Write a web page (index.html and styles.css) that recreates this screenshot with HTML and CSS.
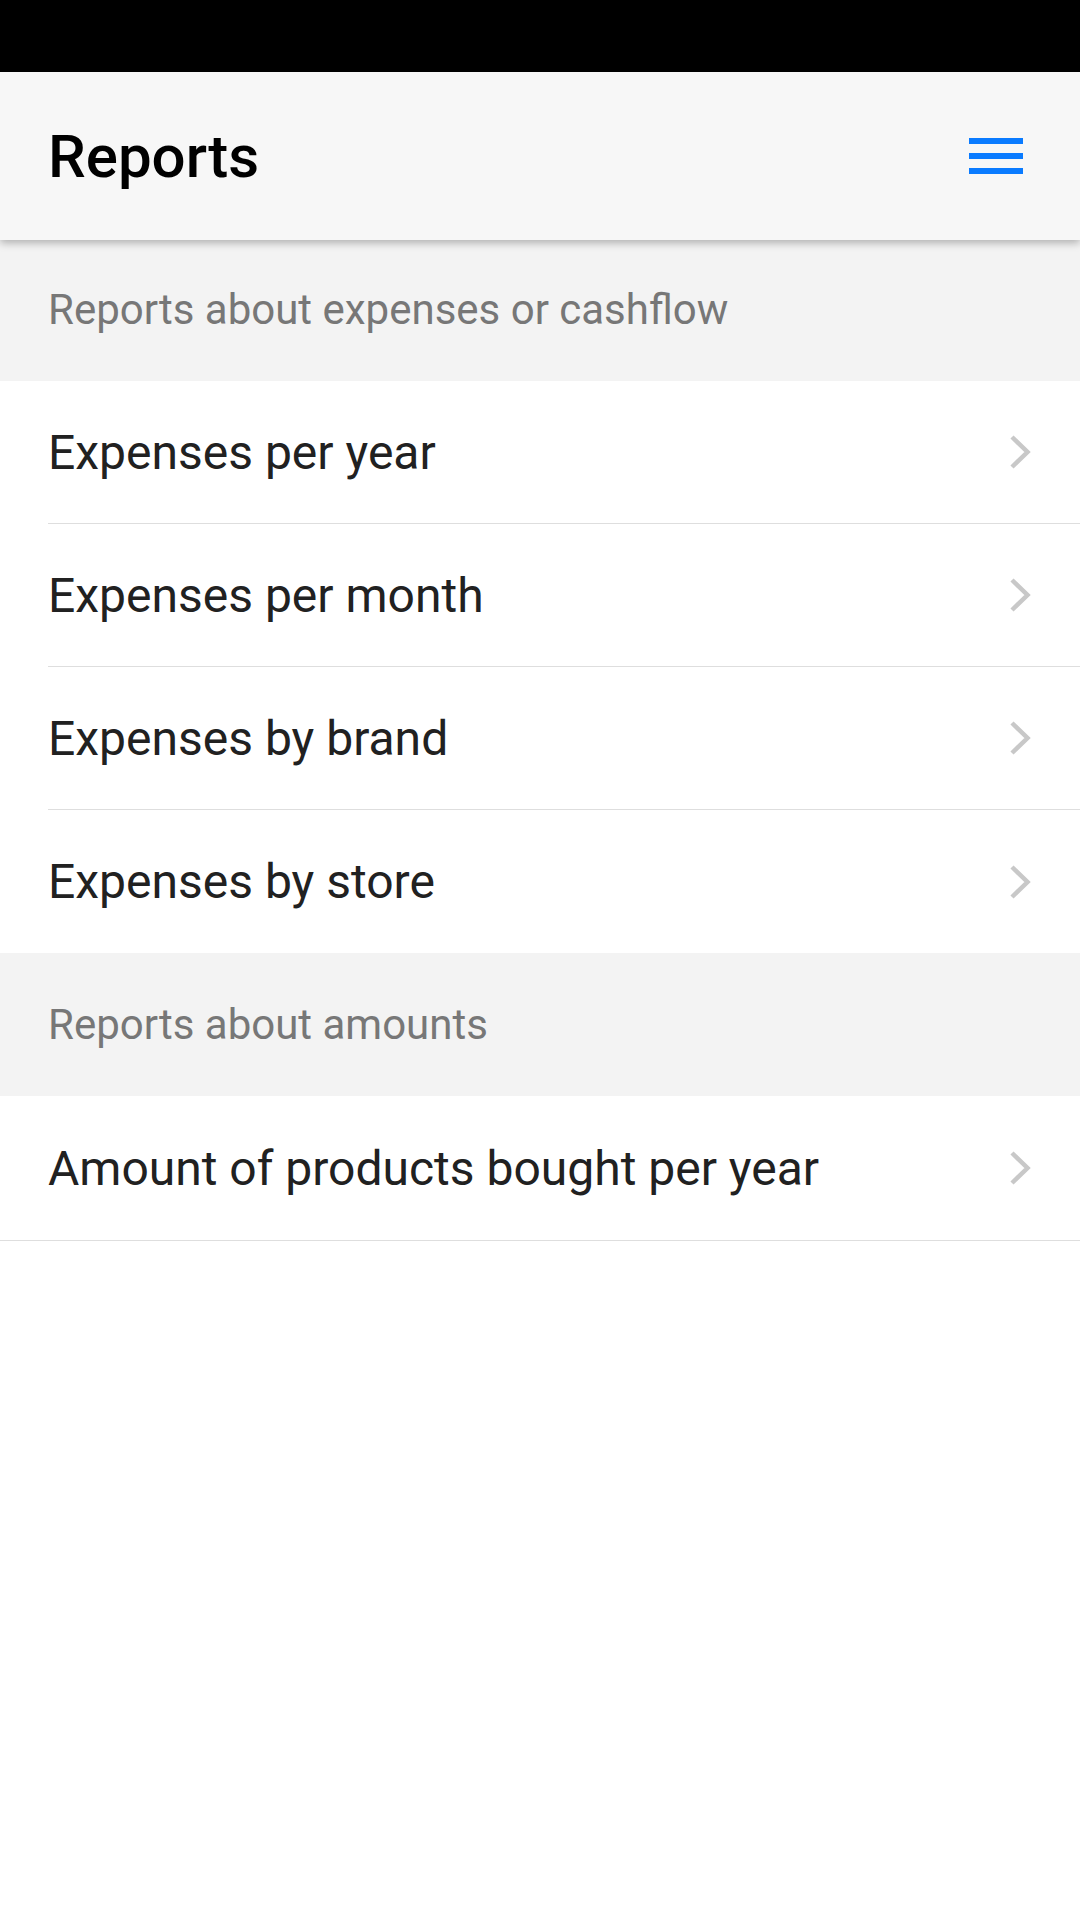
FILE: index.html
```html
<!DOCTYPE html>
<html lang="en">
<head>
<meta charset="utf-8">
<title>Reports</title>
<link rel="stylesheet" href="styles.css">
</head>
<body>
<div class="statusbar"></div>
<header class="appbar">
  <h1 class="title">Reports</h1>
  <button class="menu" aria-label="Menu">
    <span class="bar"></span><span class="bar"></span><span class="bar"></span>
  </button>
</header>
<main class="content">
  <div class="section first">Reports about expenses or cashflow</div>
  <ul class="list">
    <li class="row"><span class="label">Expenses per year</span><svg class="chev" width="22" height="36" viewBox="0 0 22 36"><polyline points="3,3 18.5,18 3,33" fill="none" stroke="#c8c8c8" stroke-width="4.5"/></svg></li>
    <li class="row"><span class="label">Expenses per month</span><svg class="chev" width="22" height="36" viewBox="0 0 22 36"><polyline points="3,3 18.5,18 3,33" fill="none" stroke="#c8c8c8" stroke-width="4.5"/></svg></li>
    <li class="row"><span class="label">Expenses by brand</span><svg class="chev" width="22" height="36" viewBox="0 0 22 36"><polyline points="3,3 18.5,18 3,33" fill="none" stroke="#c8c8c8" stroke-width="4.5"/></svg></li>
    <li class="row last-in-group"><span class="label">Expenses by store</span><svg class="chev" width="22" height="36" viewBox="0 0 22 36"><polyline points="3,3 18.5,18 3,33" fill="none" stroke="#c8c8c8" stroke-width="4.5"/></svg></li>
  </ul>
  <div class="section">Reports about amounts</div>
  <ul class="list">
    <li class="row final"><span class="label">Amount of products bought per year</span><svg class="chev" width="22" height="36" viewBox="0 0 22 36"><polyline points="3,3 18.5,18 3,33" fill="none" stroke="#c8c8c8" stroke-width="4.5"/></svg></li>
  </ul>
</main>
</body>
</html>
```
FILE: styles.css
```css
html, body {
  margin: 0;
  padding: 0;
}
body {
  width: 1080px;
  min-height: 1920px;
  background: #ffffff;
  font-family: Roboto, "Noto Sans", "Liberation Sans", sans-serif;
}
.statusbar {
  height: 72px;
  background: #000000;
}
.appbar {
  position: relative;
  z-index: 2;
  height: 168px;
  box-sizing: border-box;
  padding: 0 57px 0 48px;
  display: flex;
  align-items: center;
  justify-content: space-between;
  background: #f7f7f7;
  box-shadow: 0 3px 8px rgba(0, 0, 0, 0.28);
}
.title {
  margin: 0;
  font-size: 60px;
  font-weight: 500;
  color: #000000;
  letter-spacing: 0;
}
.menu {
  display: flex;
  flex-direction: column;
  gap: 9px;
  padding: 0;
  margin: 0;
  border: 0;
  background: transparent;
}
.bar {
  display: block;
  width: 54px;
  height: 6px;
  background: #0a7bff;
}
.content {
  position: relative;
  z-index: 1;
}
.section {
  height: 143px;
  box-sizing: border-box;
  padding-left: 48px;
  display: flex;
  align-items: center;
  background: #f3f3f3;
  color: #777777;
  font-size: 42px;
}
.section.first {
  height: 141px;
  padding-bottom: 3px;
}
.list {
  list-style: none;
  margin: 0;
  padding: 0;
}
.row {
  height: 143px;
  box-sizing: border-box;
  margin-left: 48px;
  padding-right: 49px;
  display: flex;
  align-items: center;
  justify-content: space-between;
  border-bottom: 1px solid #dedede;
  color: #212121;
  font-size: 48px;
}
.row.last-in-group {
  border-bottom: 0;
}
.row.final {
  height: 145px;
  margin-left: 0;
  padding-left: 48px;
}
.chev {
  display: block;
  flex: none;
}
```
